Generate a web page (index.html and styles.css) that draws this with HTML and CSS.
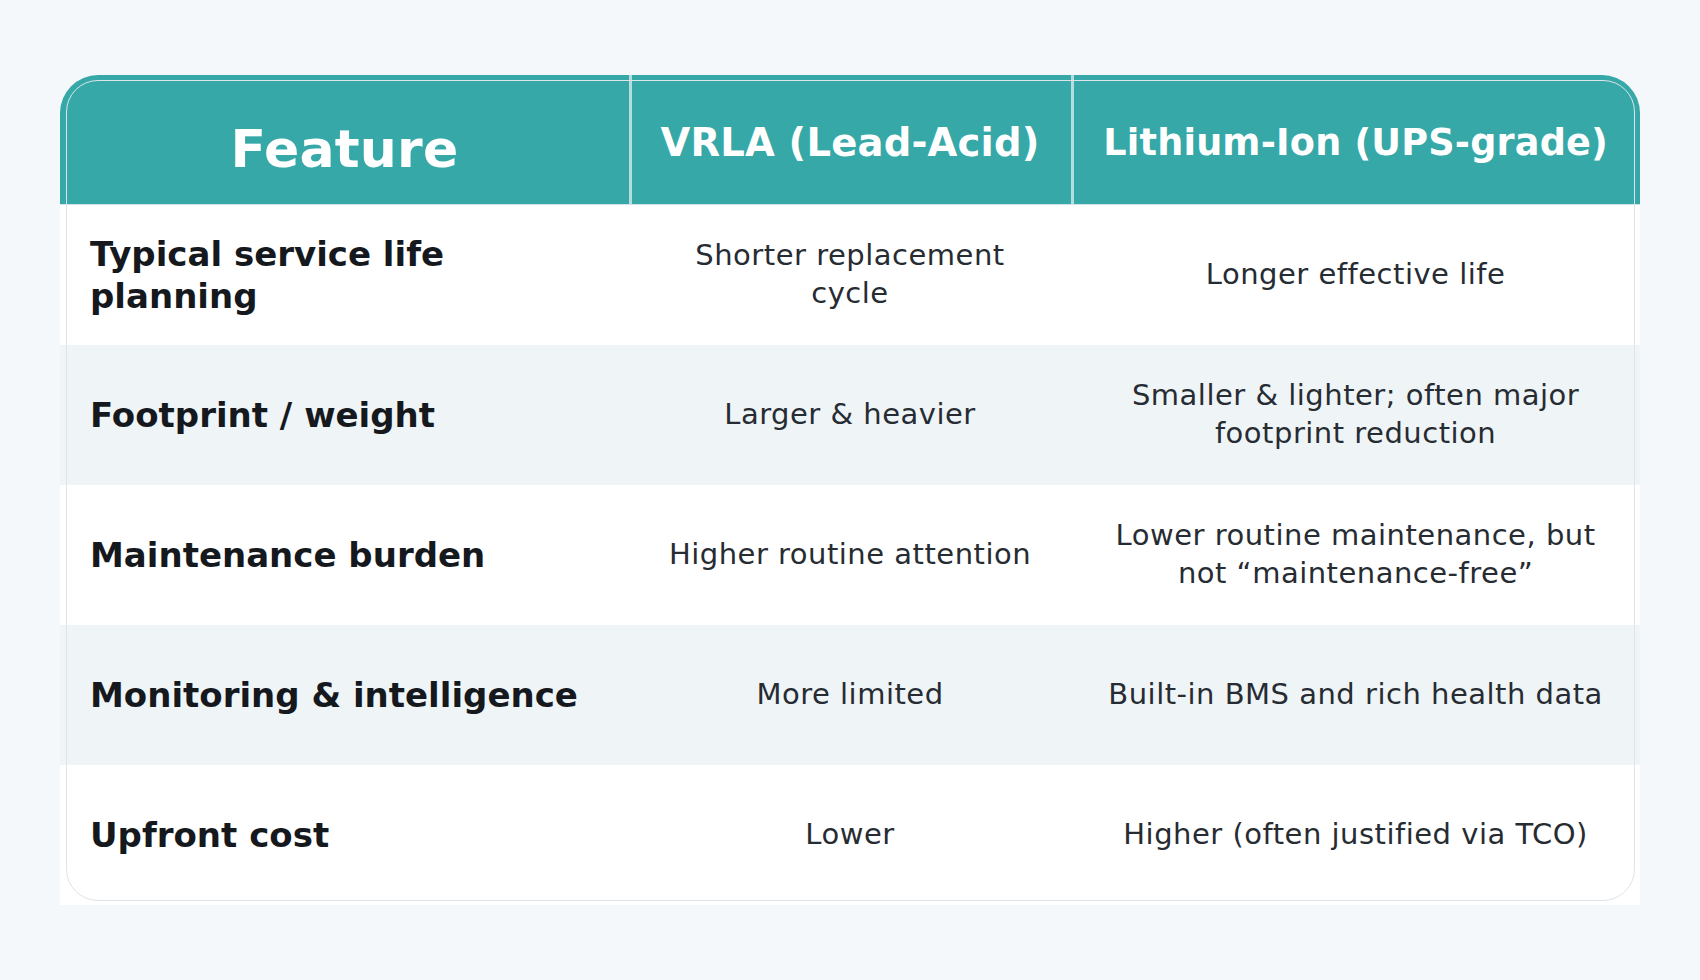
FILE: index.html
```html
<!DOCTYPE html>
<html lang="en">
<head>
<meta charset="utf-8">
<title>VRLA vs Lithium-Ion</title>
<link rel="stylesheet" href="styles.css">
</head>
<body>
<div class="card">
  <div class="row head">
    <div class="hcell feature">Feature</div>
    <div class="hcell divided">VRLA (Lead-Acid)</div>
    <div class="hcell divided lith">Lithium-Ion (UPS-grade)</div>
  </div>
  <div class="row">
    <div class="cell label">Typical service life planning</div>
    <div class="cell">Shorter replacement cycle</div>
    <div class="cell">Longer effective life</div>
  </div>
  <div class="row alt">
    <div class="cell label">Footprint / weight</div>
    <div class="cell">Larger &amp; heavier</div>
    <div class="cell">Smaller &amp; lighter; often major footprint reduction</div>
  </div>
  <div class="row">
    <div class="cell label">Maintenance burden</div>
    <div class="cell">Higher routine attention</div>
    <div class="cell">Lower routine maintenance, but not “maintenance-free”</div>
  </div>
  <div class="row alt">
    <div class="cell label">Monitoring &amp; intelligence</div>
    <div class="cell">More limited</div>
    <div class="cell">Built-in BMS and rich health data</div>
  </div>
  <div class="row">
    <div class="cell label">Upfront cost</div>
    <div class="cell">Lower</div>
    <div class="cell">Higher (often justified via TCO)</div>
  </div>
</div>
</body>
</html>
```
FILE: styles.css
```css
html, body {
  margin: 0;
  padding: 0;
}
body {
  background: #f4f8fb;
  font-family: "DejaVu Sans", "Liberation Sans", sans-serif;
  width: 1700px;
  height: 980px;
  overflow: hidden;
}
.card {
  position: relative;
  width: 1580px;
  margin: 75px 0 0 60px;
  background: #ffffff;
  border-radius: 38px 38px 0 0;
  overflow: hidden;
}
.card::after {
  content: "";
  position: absolute;
  top: 5px;
  left: 6px;
  right: 5px;
  bottom: 4px;
  border: 1.5px solid #dde4ea;
  border-radius: 32px;
  pointer-events: none;
}
.row {
  display: grid;
  grid-template-columns: 36% 28% 36%;
  height: 140px;
}
.row.alt {
  background: #eff4f7;
}
.head {
  height: 130px;
  background: #36a8a8;
  border-bottom: 1px solid #cfe4e7;
  box-sizing: border-box;
}
.hcell {
  color: #ffffff;
  font-weight: bold;
  font-size: 38.5px;
  line-height: 1.2;
  text-align: center;
  padding-top: 45px;
  letter-spacing: 0.2px;
  white-space: nowrap;
}
.hcell.feature {
  font-size: 52px;
  padding-top: 43px;
}
.hcell.lith {
  font-size: 36.6px;
  padding-top: 46px;
}
.hcell.divided {
  box-shadow: inset 3px 0 0 #b5dcdf;
}
.cell {
  display: flex;
  align-items: center;
  justify-content: center;
  text-align: center;
  padding: 0 30px;
  font-size: 29px;
  line-height: 1.3;
  letter-spacing: 0.5px;
  color: #272c33;
}
.cell.label {
  justify-content: flex-start;
  text-align: left;
  font-weight: bold;
  font-size: 34px;
  line-height: 1.25;
  letter-spacing: 0;
  padding: 0 26px 0 30px;
  color: #15191e;
}
```
